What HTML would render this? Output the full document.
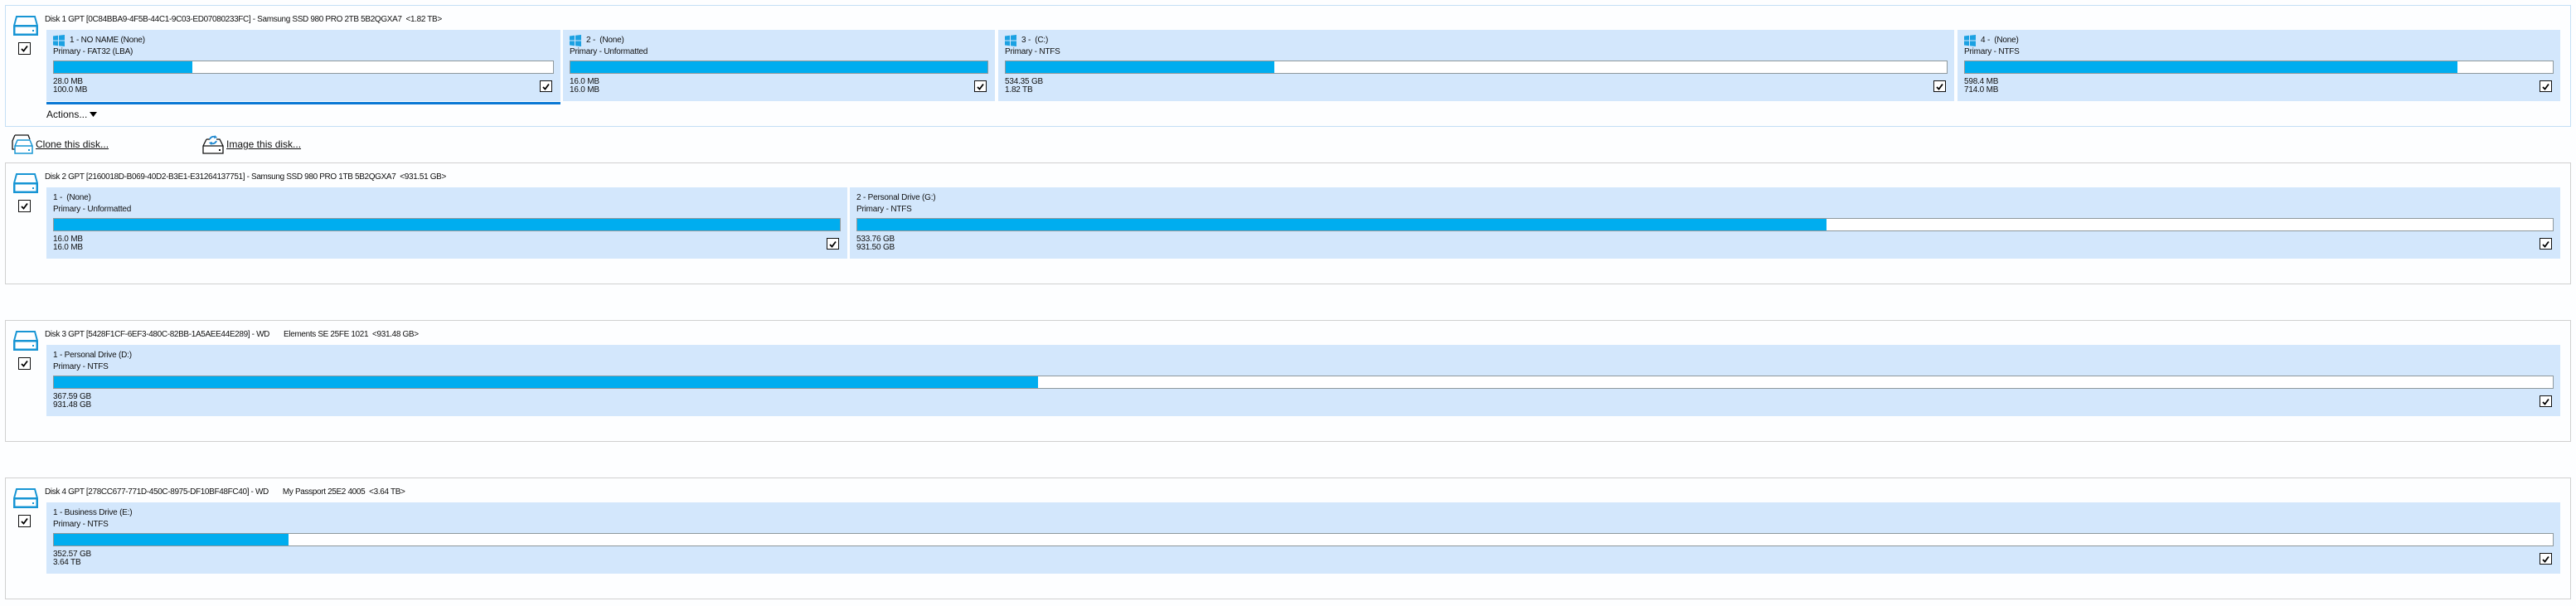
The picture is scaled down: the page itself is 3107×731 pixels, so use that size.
<!DOCTYPE html>
<html><head><meta charset="utf-8"><style>
*{margin:0;padding:0;box-sizing:border-box}
body{width:3107px;height:731px;background:#fdfeff;position:relative;overflow:hidden;font-family:"Liberation Sans",sans-serif;font-size:10px;color:#111}
.d{position:absolute;left:6px;width:3095px;height:147px;border:1px solid #d0d0d0;background:#fdfeff}
.d.sel{border-color:#c4dff5}
.hd{position:absolute;left:47px;top:10px;white-space:pre;line-height:14px;font-size:10px;letter-spacing:-0.35px}
.ic{position:absolute;left:8px;top:11px}
.ck{position:absolute;left:15px;top:44px;width:15px;height:15px;border:1px solid #111;background:#fff}
.ck svg,.cb svg{position:absolute;left:2px;top:2px}
.p{position:absolute;top:29px;height:86px;background:#d3e7fc}
.w{position:absolute;left:8px;top:6px;width:14px;height:14px}
.t{position:absolute;top:6px;line-height:14px;white-space:pre;letter-spacing:-0.2px}
.s{position:absolute;left:8px;top:20px;line-height:14px;white-space:pre;letter-spacing:-0.2px}
.bar{position:absolute;left:8px;right:8px;top:37px;height:16px;border:1px solid #8e989c;background:#fff}
.bar b{position:absolute;left:0;top:0;bottom:0;background:#00adef}
.sz{position:absolute;left:8px;top:58px;line-height:10px;font-size:10px;letter-spacing:-0.2px}
.cb{position:absolute;right:10px;top:61px;width:15px;height:14px;border:1px solid #111;background:#fff}
.lk{position:absolute;top:167px;font-size:12px;text-decoration:underline;line-height:14px}
</style></head><body>

<div class="d sel" style="top:6px">
 <svg class="ic" width="32" height="26" viewBox="0 0 32 26"><path d="M5 2 H27 L30 13 V24 H2 V13 Z M2 13 H30" fill="none" stroke="#1795d4" stroke-width="2"/><rect x="3" y="14" width="26" height="9" fill="#fff" stroke="#1795d4" stroke-width="1"/><rect x="24" y="18" width="2" height="2" fill="#1795d4"/></svg>
 <div class="hd">Disk 1 GPT [0C84BBA9-4F5B-44C1-9C03-ED07080233FC] - Samsung SSD 980 PRO 2TB 5B2QGXA7  &lt;1.82 TB&gt;</div>
 <div class="ck"><svg width="9" height="9" viewBox="0 0 9 9"><path d="M1 5 L3.5 7.5 L8 1.5" fill="none" stroke="#000" stroke-width="1.8"/></svg></div>

 <div class="p" style="left:49px;width:620px">
  <svg class="w" viewBox="0 0 14 14"><path d="M0 1.5 L6 .8 V6.5 H0 Z M7 .7 L14 0 V6.5 H7 Z M0 7.5 H6 V13.2 L0 12.5 Z M7 7.5 H14 V14 L7 13.3 Z" fill="#1ba1e2"/></svg>
  <div class="t" style="left:28px">1 - NO NAME (None)</div><div class="s">Primary - FAT32 (LBA)</div>
  <div class="bar"><b style="width:167px"></b></div><div class="sz">28.0 MB<br>100.0 MB</div>
  <span class="cb"><svg width="9" height="9" viewBox="0 0 9 9"><path d="M1 5 L3.5 7.5 L8 1.5" fill="none" stroke="#000" stroke-width="1.8"/></svg></span>
 </div>
 <div style="position:absolute;left:49px;top:116px;width:620px;height:3px;background:#0a78d4"></div>
 <div style="position:absolute;left:49px;top:124px;font-size:12px;line-height:14px">Actions...</div>
 <svg style="position:absolute;left:101px;top:128px" width="9" height="6"><path d="M0 0 H9 L4.5 6 Z" fill="#000"/></svg>

 <div class="p" style="left:672px;width:521px">
  <svg class="w" viewBox="0 0 14 14"><path d="M0 1.5 L6 .8 V6.5 H0 Z M7 .7 L14 0 V6.5 H7 Z M0 7.5 H6 V13.2 L0 12.5 Z M7 7.5 H14 V14 L7 13.3 Z" fill="#1ba1e2"/></svg>
  <div class="t" style="left:28px">2 -  (None)</div><div class="s">Primary - Unformatted</div>
  <div class="bar"><b style="width:100%"></b></div><div class="sz">16.0 MB<br>16.0 MB</div>
  <span class="cb"><svg width="9" height="9" viewBox="0 0 9 9"><path d="M1 5 L3.5 7.5 L8 1.5" fill="none" stroke="#000" stroke-width="1.8"/></svg></span>
 </div>
 <div class="p" style="left:1197px;width:1153px">
  <svg class="w" viewBox="0 0 14 14"><path d="M0 1.5 L6 .8 V6.5 H0 Z M7 .7 L14 0 V6.5 H7 Z M0 7.5 H6 V13.2 L0 12.5 Z M7 7.5 H14 V14 L7 13.3 Z" fill="#1ba1e2"/></svg>
  <div class="t" style="left:28px">3 -  (C:)</div><div class="s">Primary - NTFS</div>
  <div class="bar"><b style="width:324px"></b></div><div class="sz">534.35 GB<br>1.82 TB</div>
  <span class="cb"><svg width="9" height="9" viewBox="0 0 9 9"><path d="M1 5 L3.5 7.5 L8 1.5" fill="none" stroke="#000" stroke-width="1.8"/></svg></span>
 </div>
 <div class="p" style="left:2354px;width:727px">
  <svg class="w" viewBox="0 0 14 14"><path d="M0 1.5 L6 .8 V6.5 H0 Z M7 .7 L14 0 V6.5 H7 Z M0 7.5 H6 V13.2 L0 12.5 Z M7 7.5 H14 V14 L7 13.3 Z" fill="#1ba1e2"/></svg>
  <div class="t" style="left:28px">4 -  (None)</div><div class="s">Primary - NTFS</div>
  <div class="bar"><b style="width:594px"></b></div><div class="sz">598.4 MB<br>714.0 MB</div>
  <span class="cb"><svg width="9" height="9" viewBox="0 0 9 9"><path d="M1 5 L3.5 7.5 L8 1.5" fill="none" stroke="#000" stroke-width="1.8"/></svg></span>
 </div>
</div>

<svg style="position:absolute;left:14px;top:162px" width="26" height="24" viewBox="0 0 26 24"><path d="M4 1 H20 L22 6 M4 1 L1 8 V18 H4" fill="none" stroke="#111" stroke-width="1.3"/><path d="M7 7 H22 L25 14 V23 H4 V14 Z M4 14 H25" fill="#fff" stroke="#1795d4" stroke-width="1.5"/><rect x="20" y="18" width="2" height="2" fill="#1795d4"/></svg>
<div class="lk" style="left:43px">Clone this disk...</div>
<svg style="position:absolute;left:244px;top:161px" width="26" height="25" viewBox="0 0 26 25"><path d="M5 7 H9 M17 7 H21 L25 15 V24 H1 V15 L5 7 M1 15 H25" fill="#fff" stroke="#111" stroke-width="1.3"/><rect x="20" y="19" width="2" height="2" fill="#111"/><path d="M9 7 A5 5 0 0 1 17 5 M17 9 A5 5 0 0 1 9 11" fill="none" stroke="#1e88d0" stroke-width="1.8"/><path d="M15 2 L18 5 L14 6 Z M11 14 L8 11 L12 10 Z" fill="#1e88d0"/></svg>
<div class="lk" style="left:273px">Image this disk...</div>

<div class="d" style="top:196px">
 <svg class="ic" width="32" height="26" viewBox="0 0 32 26"><path d="M5 2 H27 L30 13 V24 H2 V13 Z M2 13 H30" fill="none" stroke="#1795d4" stroke-width="2"/><rect x="3" y="14" width="26" height="9" fill="#fff" stroke="#1795d4" stroke-width="1"/><rect x="24" y="18" width="2" height="2" fill="#1795d4"/></svg>
 <div class="hd">Disk 2 GPT [2160018D-B069-40D2-B3E1-E31264137751] - Samsung SSD 980 PRO 1TB 5B2QGXA7  &lt;931.51 GB&gt;</div>
 <div class="ck"><svg width="9" height="9" viewBox="0 0 9 9"><path d="M1 5 L3.5 7.5 L8 1.5" fill="none" stroke="#000" stroke-width="1.8"/></svg></div>
 <div class="p" style="left:49px;width:966px">
  <div class="t" style="left:8px">1 -  (None)</div><div class="s">Primary - Unformatted</div>
  <div class="bar"><b style="width:100%"></b></div><div class="sz">16.0 MB<br>16.0 MB</div>
  <span class="cb"><svg width="9" height="9" viewBox="0 0 9 9"><path d="M1 5 L3.5 7.5 L8 1.5" fill="none" stroke="#000" stroke-width="1.8"/></svg></span>
 </div>
 <div class="p" style="left:1018px;width:2063px">
  <div class="t" style="left:8px">2 - Personal Drive (G:)</div><div class="s">Primary - NTFS</div>
  <div class="bar"><b style="width:1169px"></b></div><div class="sz">533.76 GB<br>931.50 GB</div>
  <span class="cb"><svg width="9" height="9" viewBox="0 0 9 9"><path d="M1 5 L3.5 7.5 L8 1.5" fill="none" stroke="#000" stroke-width="1.8"/></svg></span>
 </div>
</div>

<div class="d" style="top:386px">
 <svg class="ic" width="32" height="26" viewBox="0 0 32 26"><path d="M5 2 H27 L30 13 V24 H2 V13 Z M2 13 H30" fill="none" stroke="#1795d4" stroke-width="2"/><rect x="3" y="14" width="26" height="9" fill="#fff" stroke="#1795d4" stroke-width="1"/><rect x="24" y="18" width="2" height="2" fill="#1795d4"/></svg>
 <div class="hd">Disk 3 GPT [5428F1CF-6EF3-480C-82BB-1A5AEE44E289] - WD       Elements SE 25FE 1021  &lt;931.48 GB&gt;</div>
 <div class="ck"><svg width="9" height="9" viewBox="0 0 9 9"><path d="M1 5 L3.5 7.5 L8 1.5" fill="none" stroke="#000" stroke-width="1.8"/></svg></div>
 <div class="p" style="left:49px;width:3032px">
  <div class="t" style="left:8px">1 - Personal Drive (D:)</div><div class="s">Primary - NTFS</div>
  <div class="bar"><b style="width:1187px"></b></div><div class="sz">367.59 GB<br>931.48 GB</div>
  <span class="cb"><svg width="9" height="9" viewBox="0 0 9 9"><path d="M1 5 L3.5 7.5 L8 1.5" fill="none" stroke="#000" stroke-width="1.8"/></svg></span>
 </div>
</div>

<div class="d" style="top:576px">
 <svg class="ic" width="32" height="26" viewBox="0 0 32 26"><path d="M5 2 H27 L30 13 V24 H2 V13 Z M2 13 H30" fill="none" stroke="#1795d4" stroke-width="2"/><rect x="3" y="14" width="26" height="9" fill="#fff" stroke="#1795d4" stroke-width="1"/><rect x="24" y="18" width="2" height="2" fill="#1795d4"/></svg>
 <div class="hd">Disk 4 GPT [278CC677-771D-450C-8975-DF10BF48FC40] - WD       My Passport 25E2 4005  &lt;3.64 TB&gt;</div>
 <div class="ck"><svg width="9" height="9" viewBox="0 0 9 9"><path d="M1 5 L3.5 7.5 L8 1.5" fill="none" stroke="#000" stroke-width="1.8"/></svg></div>
 <div class="p" style="left:49px;width:3032px">
  <div class="t" style="left:8px">1 - Business Drive (E:)</div><div class="s">Primary - NTFS</div>
  <div class="bar"><b style="width:283px"></b></div><div class="sz">352.57 GB<br>3.64 TB</div>
  <span class="cb"><svg width="9" height="9" viewBox="0 0 9 9"><path d="M1 5 L3.5 7.5 L8 1.5" fill="none" stroke="#000" stroke-width="1.8"/></svg></span>
 </div>
</div>
</body></html>
